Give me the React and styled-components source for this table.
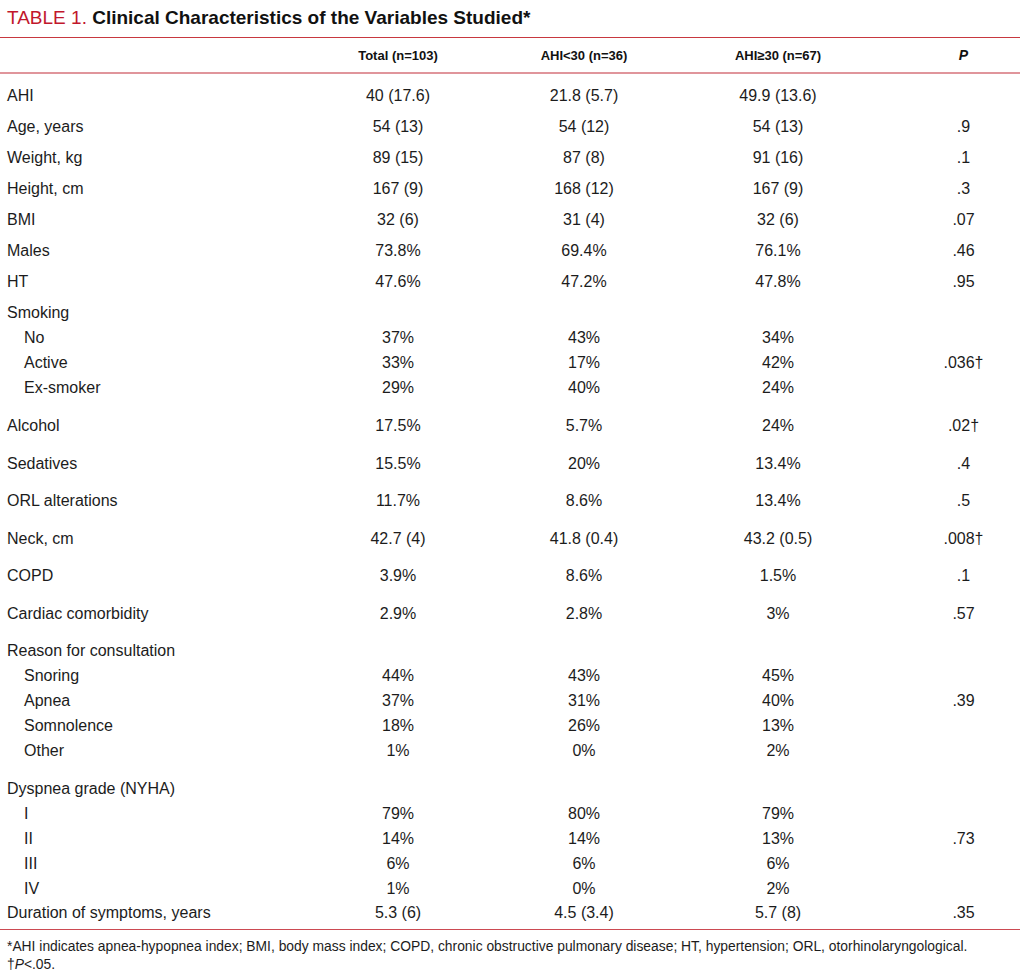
import React from "react";
import styled, { createGlobalStyle } from "styled-components";

const GlobalStyle = createGlobalStyle`
  body {
    margin: 0;
    background: #fff;
    font-family: "Liberation Sans", Arial, sans-serif;
    color: #1c1c1c;
  }
`;

const simpleRows = [
  ["AHI", "40 (17.6)", "21.8 (5.7)", "49.9 (13.6)", ""],
  ["Age, years", "54 (13)", "54 (12)", "54 (13)", ".9"],
  ["Weight, kg", "89 (15)", "87 (8)", "91 (16)", ".1"],
  ["Height, cm", "167 (9)", "168 (12)", "167 (9)", ".3"],
  ["BMI", "32 (6)", "31 (4)", "32 (6)", ".07"],
  ["Males", "73.8%", "69.4%", "76.1%", ".46"],
  ["HT", "47.6%", "47.2%", "47.8%", ".95"],
];

const smoking = [
  ["No", "37%", "43%", "34%", ""],
  ["Active", "33%", "17%", "42%", ".036†"],
  ["Ex-smoker", "29%", "40%", "24%", ""],
];

const middleRows = [
  ["Alcohol", "17.5%", "5.7%", "24%", ".02†"],
  ["Sedatives", "15.5%", "20%", "13.4%", ".4"],
  ["ORL alterations", "11.7%", "8.6%", "13.4%", ".5"],
  ["Neck, cm", "42.7 (4)", "41.8 (0.4)", "43.2 (0.5)", ".008†"],
  ["COPD", "3.9%", "8.6%", "1.5%", ".1"],
  ["Cardiac comorbidity", "2.9%", "2.8%", "3%", ".57"],
];

const reason = [
  ["Snoring", "44%", "43%", "45%", ""],
  ["Apnea", "37%", "31%", "40%", ".39"],
  ["Somnolence", "18%", "26%", "13%", ""],
  ["Other", "1%", "0%", "2%", ""],
];

const dyspnea = [
  ["I", "79%", "80%", "79%", ""],
  ["II", "14%", "14%", "13%", ".73"],
  ["III", "6%", "6%", "6%", ""],
  ["IV", "1%", "0%", "2%", ""],
];

const DataRow = ({ row, indent, pt, pb, lh }) => (
  <Row $pt={pt} $pb={pb} $lh={lh}>
    <Label $indent={indent}>{row[0]}</Label>
    <Cell>{row[1]}</Cell>
    <Cell>{row[2]}</Cell>
    <Cell>{row[3]}</Cell>
    <PCell>{row[4]}</PCell>
  </Row>
);

const SubGroup = ({ title, rows, pt, pb }) => (
  <Group $pt={pt} $pb={pb}>
    <Row>
      <Label>{title}</Label>
    </Row>
    {rows.map((r) => (
      <DataRow key={r[0]} row={r} indent />
    ))}
  </Group>
);

export default function App() {
  return (
    <>
      <GlobalStyle />
      <Page>
        <Title>
          <TitleNum>TABLE 1.</TitleNum> <strong>Clinical Characteristics of the Variables Studied*</strong>
        </Title>
        <Table>
          <HeadRow>
            <span />
            <HeadCell>Total (n=103)</HeadCell>
            <HeadCell>AHI&lt;30 (n=36)</HeadCell>
            <HeadCell>AHI≥30 (n=67)</HeadCell>
            <HeadP>
              <em>P</em>
            </HeadP>
          </HeadRow>
          <Body>
            {simpleRows.map((r) => (
              <DataRow key={r[0]} row={r} pt={3} pb={3} />
            ))}
            <SubGroup title="Smoking" rows={smoking} pt={3} pb={7} />
            {middleRows.map((r) => (
              <DataRow key={r[0]} row={r} pt={6.25} pb={6.25} />
            ))}
            <SubGroup title="Reason for consultation" rows={reason} pt={5.5} pb={8} />
            <SubGroup title="Dyspnea grade (NYHA)" rows={dyspnea} pt={5.5} pb={0} />
            <DataRow
              row={["Duration of symptoms, years", "5.3 (6)", "4.5 (3.4)", "5.7 (8)", ".35"]}
              pt={0}
              pb={5}
              lh={23}
            />
          </Body>
          <Footnote>
            <div>
              *AHI indicates apnea-hypopnea index; BMI, body mass index; COPD, chronic obstructive
              pulmonary disease; HT, hypertension; ORL, otorhinolaryngological.
            </div>
            <div>
              †<em>P</em>&lt;.05.
            </div>
          </Footnote>
        </Table>
      </Page>
    </>
  );
}

const Page = styled.div`
  width: 1020px;
`;

const Title = styled.div`
  height: 37px;
  box-sizing: border-box;
  padding: 0 0 2px 7px;
  line-height: 35px;
  font-size: 19px;
  color: #111;
  white-space: nowrap;
`;

const TitleNum = styled.span`
  color: #c1172c;
`;

const Table = styled.div`
  border-top: 1px solid #c8383f;
`;

const grid = `
  display: grid;
  grid-template-columns: 305px 186px 186px 202px 1fr;
  align-items: center;
`;

const HeadRow = styled.div`
  ${grid};
  height: 34px;
  border-bottom: 2px solid #e0959b;
  font-size: 13px;
  font-weight: bold;
  color: #111;
`;

const HeadCell = styled.div`
  text-align: center;
`;

const HeadP = styled(HeadCell)`
  padding-left: 28px;
  font-size: 14px;
`;

const Body = styled.div`
  padding: 6px 0 0;
  border-bottom: 1px solid #cc4a52;
`;

const Group = styled.div`
  padding-top: ${(p) => p.$pt || 0}px;
  padding-bottom: ${(p) => p.$pb || 0}px;
`;

const Row = styled.div`
  ${grid};
  padding-top: ${(p) => p.$pt || 0}px;
  padding-bottom: ${(p) => p.$pb || 0}px;
  line-height: ${(p) => p.$lh || 25}px;
  font-size: 16px;
`;

const Label = styled.div`
  padding-left: ${(p) => (p.$indent ? 24 : 7)}px;
  white-space: nowrap;
`;

const Cell = styled.div`
  text-align: center;
`;

const PCell = styled(Cell)`
  padding-left: 28px;
`;

const Footnote = styled.div`
  padding: 7px 0 0 7px;
  font-size: 13.85px;
  line-height: 18px;
  color: #1c1c1c;
`;
